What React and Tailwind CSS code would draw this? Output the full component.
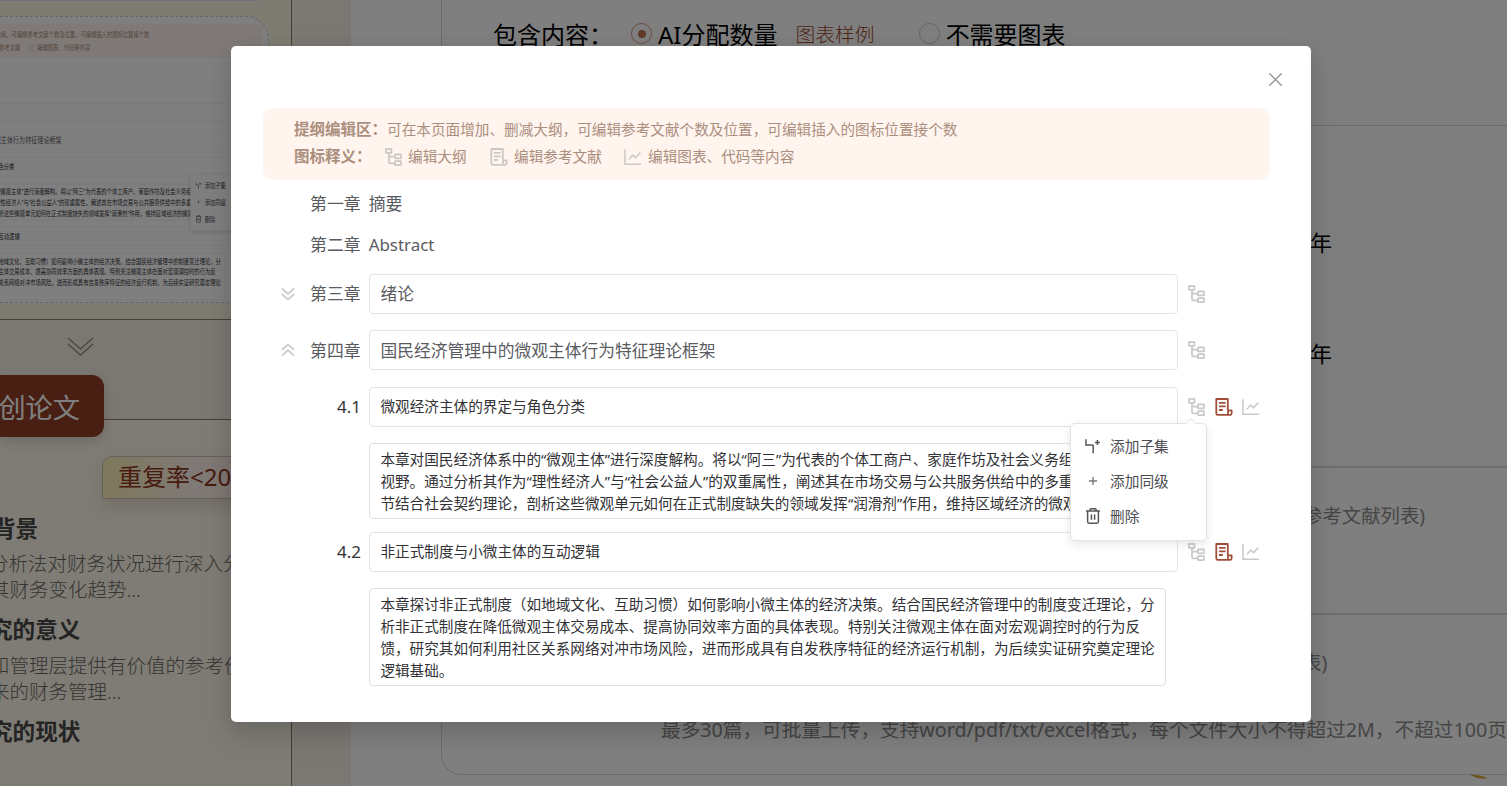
import React from 'react';
import { X } from 'lucide-react';

const TreeIcon = () => (
  <svg width="18" height="18" viewBox="0 0 18 18" fill="none" stroke="#cbc8c7" strokeWidth="1.7" className="shrink-0">
    <rect x="1" y="1" width="5.4" height="3.8" />
    <path d="M4 4.8V14.2Q4 15.4 5.2 15.4H10M4 8.6H10" />
    <rect x="10" y="6.4" width="6" height="4" rx="0.5" />
    <rect x="10" y="13.2" width="6" height="4" rx="0.5" />
  </svg>
);

const DocIcon = ({ color = '#a24d38' }) => (
  <svg width="18" height="18" viewBox="0 0 18 18" fill="none" stroke={color} strokeWidth="1.8" strokeLinejoin="round" className="shrink-0">
    <path d="M12.8 12V1H1.3V15.2Q1.3 16.8 2.8 16.8H15Q16.6 16.8 16.6 15.4V12.4H13V16.4" />
    <path d="M4 4.9H10.6M4 8.4H10.6M4 12H7.8" />
  </svg>
);

const ChartIcon = () => (
  <svg width="18" height="18" viewBox="0 0 18 18" fill="none" stroke="#cbc8c7" strokeWidth="1.5" className="shrink-0">
    <path d="M1 1.2V16.2H17" />
    <path d="M5 11.2L8.8 7L11.6 9.6L16.4 4.6" />
  </svg>
);

const FoldIcon = ({ open }) => (
  <svg width="14" height="14" viewBox="0 0 14 14" fill="none" stroke="#cbc8c7" strokeWidth="1.7" className="shrink-0">
    {open ? <path d="M1 6.8L7 1.4L13 6.8M1 12.6L7 7.2L13 12.6" /> : <path d="M1 1.4L7 6.8L13 1.4M1 7.2L7 12.6L13 7.2" />}
  </svg>
);

const ChildIcon = () => (
  <svg width="16" height="16" viewBox="0 0 16 16" fill="none" stroke="#55555a" strokeWidth="1.5" className="shrink-0">
    <path d="M1 1.2V7H7.4Q8.2 7 8.2 7.8V15.2M12.4 2V7M9.9 4.5H14.9" />
  </svg>
);

const PlusIcon = () => (
  <svg width="16" height="16" viewBox="0 0 16 16" fill="none" stroke="#77777b" strokeWidth="1.3" className="shrink-0">
    <path d="M8 4V12M4 8H12" />
  </svg>
);

const TrashIcon = () => (
  <svg width="16" height="18" viewBox="0 0 16 18" fill="none" stroke="#55555a" strokeWidth="1.5" className="shrink-0">
    <path d="M1 4H15M5 4V2.6Q5 1.8 5.8 1.8H10.2Q11 1.8 11 2.6V4M2.6 4V14.6Q2.6 16.2 4.2 16.2H11.8Q13.4 16.2 13.4 14.6V4M6.4 7.4V12.8M9.6 7.4V12.8" />
  </svg>
);

const sections = [
  {
    no: '4.1',
    title: '微观经济主体的界定与角色分类',
    height: 'h-[76px]',
    gap: 'mb-[12.5px]',
    lines: [
      '本章对国民经济体系中的“微观主体”进行深度解构。将以“阿三”为代表的个体工商户、家庭作坊及社会义务组',
      '视野。通过分析其作为“理性经济人”与“社会公益人”的双重属性，阐述其在市场交易与公共服务供给中的多重',
      '节结合社会契约理论，剖析这些微观单元如何在正式制度缺失的领域发挥“润滑剂”作用，维持区域经济的微观',
    ],
  },
  {
    no: '4.2',
    title: '非正式制度与小微主体的互动逻辑',
    height: 'h-[98px]',
    gap: '',
    lines: [
      '本章探讨非正式制度（如地域文化、互助习惯）如何影响小微主体的经济决策。结合国民经济管理中的制度变迁理论，分',
      '析非正式制度在降低微观主体交易成本、提高协同效率方面的具体表现。特别关注微观主体在面对宏观调控时的行为反',
      '馈，研究其如何利用社区关系网络对冲市场风险，进而形成具有自发秩序特征的经济运行机制，为后续实证研究奠定理论',
      '逻辑基础。',
    ],
  },
];

const chapters = [
  { no: '第三章', title: '绪论', open: false },
  { no: '第四章', title: '国民经济管理中的微观主体行为特征理论框架', open: true },
];

const ActionMenu = () => (
  <div className="absolute left-[839px] top-[377px] flex h-[118px] w-[137px] flex-col rounded-[5px] border border-[#e2e4ec] bg-white pl-[14px] pt-[4px] text-[14.7px] text-[#4c4c51] shadow-[0_3px_10px_rgba(0,0,0,0.10)]">
    <span className="absolute -top-[4.5px] left-[116px] size-2 rotate-45 border-l border-t border-[#e8e9ee] bg-white" />
    <div className="flex h-[35.3px] items-center gap-[9px]"><ChildIcon />添加子集</div>
    <div className="flex h-[35.3px] items-center gap-[9px]"><PlusIcon />添加同级</div>
    <div className="flex h-[35.3px] items-center gap-[9px]"><TrashIcon />删除</div>
  </div>
);

const OutlineEditor = () => (
  <div className="relative h-[676px] w-[1080px] pl-8 pt-[62px]">
    <div className="flex h-[72px] w-[1007px] flex-col rounded-[11px] bg-[#fff4ee] pl-[31px] pt-2 text-[14.64px] text-[#ab8f7e]">
      <div className="flex h-[27px] items-center">
        <b className="w-[93px] text-[15.5px] font-bold">提纲编辑区：</b>
        <span>可在本页面增加、删减大纲，可编辑参考文献个数及位置，可编辑插入的图标位置接个数</span>
      </div>
      <div className="flex h-[28px] items-center">
        <b className="w-[91px] text-[15.5px] font-bold">图标释义：</b>
        <TreeIcon />
        <span className="ml-[5px] w-[82px]">编辑大纲</span>
        <DocIcon color="#cbc8c7" />
        <span className="ml-[6px] w-[110px]">编辑参考文献</span>
        <ChartIcon />
        <span className="ml-[6px]">编辑图表、代码等内容</span>
      </div>
    </div>

    <div className="mb-[9px] ml-[47px] mt-[3px] text-[16.9px] text-[#5a5b5f]">
      <div className="flex h-[41px] items-center gap-2"><span>第一章</span><span>摘要</span></div>
      <div className="flex h-[41px] items-center gap-2"><span>第二章</span><span>Abstract</span></div>
    </div>

    {chapters.map((chapter) => (
      <div key={chapter.no} className="mb-[16.25px] ml-[18px] flex h-10 items-center text-[16.75px] text-[#5a5b5f]">
        <FoldIcon open={chapter.open} />
        <span className="ml-[15px] w-[59.4px] text-[16.9px]">{chapter.no}</span>
        <div className="mr-2.5 flex h-10 w-[809px] items-center rounded-[4px] border border-[#e1e3eb] pl-[10px]">{chapter.title}</div>
        <TreeIcon />
      </div>
    ))}

    {sections.map((section) => (
      <div key={section.no}>
        <div className="mb-[16.5px] flex h-10 items-center text-[#323236]">
          <span className="w-[106.4px] pl-[74px] text-[17px]">{section.no}</span>
          <div className="mr-2.5 flex h-10 w-[809px] items-center rounded-[4px] border border-[#e1e3eb] pl-[10px] text-[14.64px]">{section.title}</div>
          <div className="flex gap-[9px]">
            <TreeIcon />
            <DocIcon />
            <ChartIcon />
          </div>
        </div>
        <div className={`ml-[106.4px] w-[797px] overflow-hidden rounded-[4px] border border-[#dcdfe6] pl-[10px] pt-[4px] text-[14.62px] leading-[22px] text-[#323236] ${section.height} ${section.gap}`}>
          {section.lines.map((line) => (
            <p key={line} className="whitespace-nowrap">{line}</p>
          ))}
        </div>
      </div>
    ))}

    <ActionMenu />
  </div>
);

const Sidebar = () => (
  <aside className="flex w-[351px] shrink-0 flex-col bg-[#f6efe4]">
    <div className="h-[320px] w-[292px] border-b border-r border-[#94796c] bg-[#fcf6e4]">
      <div className="h-px w-[257px] bg-[#dfdeee]" />
      <div className="relative mt-[15px] h-[287px] w-[269px] overflow-hidden rounded-tr-[24px] border-y border-r border-dashed border-[#cdcbd6] bg-white">
        <div className="absolute -left-[114px] -top-[23px] origin-top-left scale-x-[0.3625] scale-y-[0.4785]">
          <OutlineEditor />
        </div>
      </div>
    </div>

    <div className="relative h-[99px] w-[292px]">
      <svg width="27" height="19" viewBox="0 0 27 19" fill="none" stroke="#a08c82" strokeWidth="1.4" className="ml-[67px] mt-[17px]">
        <path d="M1 1L13.5 12L26 1M1 7L13.5 18L26 7" />
      </svg>
      <div className="absolute left-0 top-[55px] flex h-[62px] w-[104px] items-center justify-end rounded-r-[12px] bg-[#923e26] pr-6 pt-[4px] text-[27.2px] text-white shadow-[0_4px_12px_rgba(80,40,10,0.18)]">
        <span className="whitespace-nowrap">创论文</span>
      </div>
    </div>

    <div className="w-[292px] grow border-r border-t border-[#94796c] bg-[#fdf8ea]">
      <div className="ml-[102px] mt-[36px] flex h-[43px] items-center rounded-tl-[10px] border border-[#cdbfb2] bg-gradient-to-r from-[#fdf0b8] via-[#fff4ee] to-[#fde0d6] pb-[2px] pl-[15px] text-[24px] text-[#8f3720] shadow-[0_8px_16px_rgba(90,70,40,0.15)]">
        <span className="whitespace-nowrap">重复率&lt;20%</span>
      </div>
      <div className="mt-[14px] whitespace-nowrap text-[19.5px] font-light leading-[26px] text-[#6c6a66]">
        <h3 className="-ml-[7px] mb-[5px] h-[33px] text-[22.6px] font-bold leading-[32px] text-[#484848]">背景</h3>
        <p className="-ml-[11px]">分析法对财务状况进行深入分</p>
        <p className="-ml-[10px]">其财务变化趋势...</p>
        <h3 className="-ml-[10px] mb-[5px] mt-[11px] h-[34px] text-[22.6px] font-bold leading-[32px] text-[#484848]">究的意义</h3>
        <p className="-ml-[10px]">和管理层提供有价值的参考价</p>
        <p className="-ml-[10px]">来的财务管理...</p>
        <h3 className="-ml-[10px] mt-[11px] h-[33px] text-[22.6px] font-bold leading-[32px] text-[#484848]">究的现状</h3>
      </div>
    </div>
  </aside>
);

const PaperForm = () => (
  <main className="grow overflow-hidden pl-[90px]">
    <div className="h-[775px] w-[1100px] rounded-bl-[20px] border-b border-l border-[#d8d8dc] text-[19.4px] text-[#8c8c8c]">
      <div className="flex h-[126px] items-start border-b border-[#d8d8dc] pl-[51px] pt-[17px] text-[24px] leading-[36px] text-black">
        <span className="w-[138px] whitespace-nowrap">包含内容：</span>
        <span className="mr-[6px] mt-[6px] flex size-[21px] items-center justify-center rounded-full border border-[#d8917a]">
          <span className="size-[8px] rounded-full bg-[#c27450]" />
        </span>
        <span>AI分配数量</span>
        <span className="ml-[18px] text-[19.8px] font-light text-[#a34b2f]">图表样例</span>
        <span className="ml-[44px] mr-[6px] mt-[6px] size-[21px] rounded-full border border-[#c9c9cc]" />
        <span>不需要图表</span>
      </div>
      <div className="flex h-[342px] flex-col gap-[78px] border-b-2 border-[#dcdbe4] pl-[868px] pt-[100px] text-[22px] leading-[33px] text-black">
        <span>年</span>
        <span>年</span>
      </div>
      <div className="h-[147px] border-b-2 border-[#dcdbe4] pl-[861px] pt-[33px] leading-[30px]">参考文献列表)</div>
      <div className="pl-[219px] leading-[30px]">
        <p className="pl-[641px] pt-[33px]">表)</p>
        <p className="mt-[37px] whitespace-nowrap text-[19.66px]">最多30篇，可批量上传，支持word/pdf/txt/excel格式，每个文件大小不得超过2M，不超过100页</p>
      </div>
    </div>
    <svg width="20" height="5" viewBox="0 0 20 5" className="ml-[1028px]">
      <path d="M1 0Q9 -1 19 3.2Q10 5 1 0Z" fill="#d8aa3a" />
    </svg>
  </main>
);

export default function App() {
  return (
    <div className="relative flex h-[786px] w-[1507px] overflow-hidden bg-white font-['Noto_Sans','Noto_Sans_CJK_SC',sans-serif]">
      <Sidebar />
      <PaperForm />
      <div className="absolute inset-0 flex items-start bg-black/50 pl-[231px] pt-[46px]">
        <div className="relative rounded-[5px] bg-white shadow-[0_12px_32px_4px_rgba(0,0,0,0.08),0_8px_20px_rgba(0,0,0,0.10)]">
          <OutlineEditor />
          <button className="absolute right-[24.5px] top-[21.5px] text-[#909399]" aria-label="关闭">
            <X size={23} strokeWidth={1.4} />
          </button>
        </div>
      </div>
    </div>
  );
}
